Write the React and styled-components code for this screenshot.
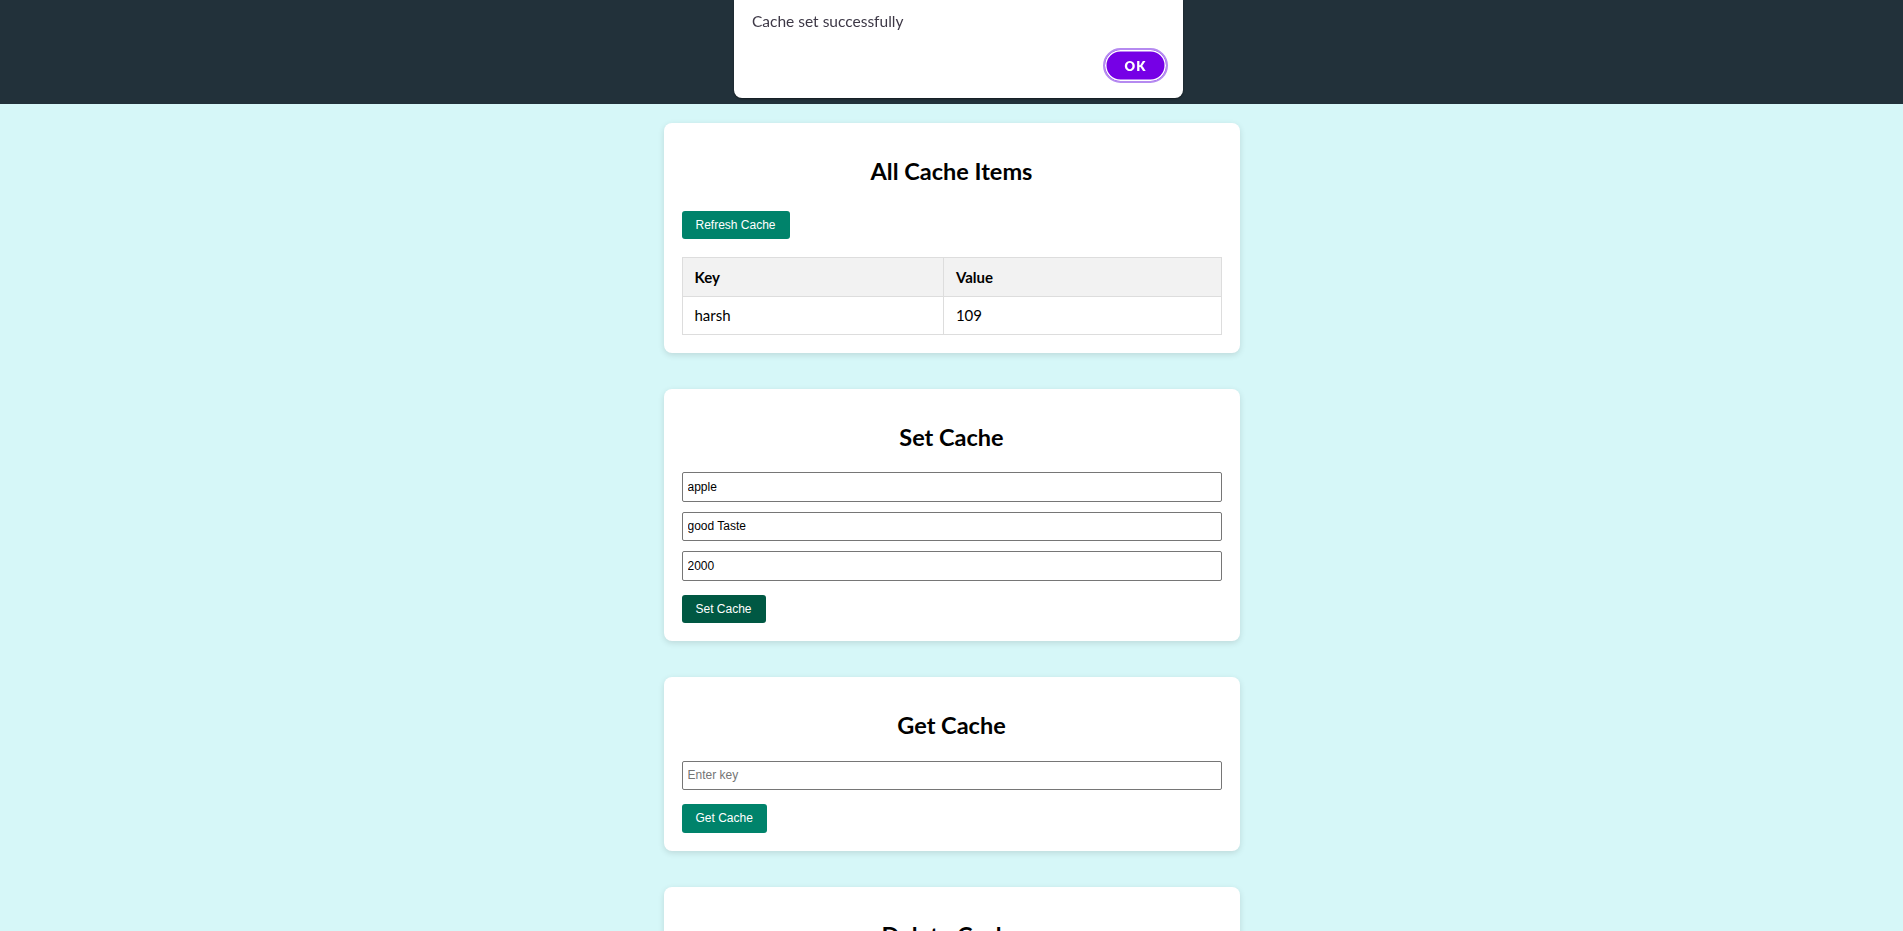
import React from "react";
import styled, { createGlobalStyle } from "styled-components";

const GlobalStyle = createGlobalStyle`
  html, body { margin: 0; padding: 0; }
  html { scrollbar-width: none; }
  ::-webkit-scrollbar { display: none; }
  body {
    background: #d6f7f8;
    font-family: Lato, "Noto Sans", sans-serif;
    color: #111;
  }
`;

const Header = styled.header`
  height: 104px;
  background: #22313a;
  display: flex;
  align-items: center;
  justify-content: center;
`;

const HeaderTitle = styled.h1`
  margin: 0;
  color: #fff;
  font-size: 26px;
  font-weight: 700;
`;

const Main = styled.main`
  display: flex;
  flex-direction: column;
  align-items: center;
  padding-top: 1px;
`;

const Card = styled.section`
  width: 576px;
  box-sizing: border-box;
  margin: 18px 0;
  padding: 18px;
  background: #fff;
  border-radius: 8px;
  box-shadow: 0 2px 6px rgba(0, 0, 0, 0.12);
  display: flex;
  flex-direction: column;
  align-items: flex-start;
`;

const Title = styled.h2`
  align-self: stretch;
  margin: 16px 0 21.5px;
  font-size: 23.5px;
  line-height: 28px;
  font-weight: 700;
  text-align: center;
  color: #000;
`;

const Input = styled.input`
  align-self: stretch;
  display: block;
  box-sizing: border-box;
  height: 29.5px;
  margin: 0 0 10px;
  padding: 0 5px;
  font-family: "Liberation Sans", Arial, sans-serif;
  font-size: 12px;
  color: #000;
  border: 1px solid #767676;
  border-radius: 2px;
  background: #fff;
  outline: none;
  &::placeholder { color: #757575; }
`;

const Button = styled.button`
  margin: 4px 0 0;
  padding: 7px 14px;
  font-family: "Liberation Sans", Arial, sans-serif;
  font-size: 12px;
  line-height: 14.5px;
  color: #fff;
  background: ${(p) => (p.$active ? "#005843" : "#00836b")};
  border: none;
  border-radius: 3px;
  cursor: pointer;
`;

const Table = styled.table`
  align-self: stretch;
  margin-top: 18px;
  width: 100%;
  border-collapse: collapse;
`;

const Th = styled.th`
  width: ${(p) => p.$w || "auto"};
  height: 39px;
  box-sizing: border-box;
  padding: 0 12px;
  border: 1px solid #ddd;
  background: #f2f2f2;
  text-align: left;
  font-size: 15px;
  line-height: 19px;
  font-weight: 700;
  color: #000;
`;

const Td = styled.td`
  height: 37.5px;
  box-sizing: border-box;
  padding: 0 12px;
  border: 1px solid #ddd;
  text-align: left;
  font-size: 15px;
  line-height: 19px;
  color: #000;
`;

const Dialog = styled.div`
  position: fixed;
  top: 0;
  left: calc(50% - 217.5px);
  width: 449px;
  height: 98px;
  box-sizing: border-box;
  padding: 10px 15px 15px 18px;
  background: #fff;
  border-radius: 0 0 8px 8px;
  box-shadow: 0 1px 2px rgba(0, 0, 0, 0.45);
  display: flex;
  flex-direction: column;
  justify-content: space-between;
`;

const DialogText = styled.p`
  margin: 0;
  font-size: 15.5px;
  line-height: 22px;
  color: #3d3846;
`;

const DialogActions = styled.div`
  display: flex;
  justify-content: flex-end;
`;

const OkButton = styled.button`
  width: 65px;
  height: 35px;
  box-sizing: border-box;
  border-radius: 999px;
  border: 2px solid #b58af0;
  box-shadow: inset 0 0 0 1.5px #fff;
  background: #7600e6;
  color: #fff;
  font-family: Lato, "Noto Sans", sans-serif;
  font-weight: 800;
  font-size: 13px;
  letter-spacing: 1px;
  cursor: pointer;
`;

export default function App() {
  return (
    <>
      <GlobalStyle />
      <Header>
        <HeaderTitle>Cache Manager</HeaderTitle>
      </Header>
      <Main>
        <Card>
          <Title>All Cache Items</Title>
          <Button>Refresh Cache</Button>
          <Table>
            <thead>
              <tr>
                <Th $w="48.5%">Key</Th>
                <Th>Value</Th>
              </tr>
            </thead>
            <tbody>
              <tr>
                <Td>harsh</Td>
                <Td>109</Td>
              </tr>
            </tbody>
          </Table>
        </Card>
        <Card>
          <Title>Set Cache</Title>
          <Input defaultValue="apple" placeholder="Enter key" />
          <Input defaultValue="good Taste" placeholder="Enter value" />
          <Input defaultValue="2000" placeholder="Enter duration" />
          <Button $active>Set Cache</Button>
        </Card>
        <Card>
          <Title>Get Cache</Title>
          <Input placeholder="Enter key" />
          <Button>Get Cache</Button>
        </Card>
        <Card>
          <Title>Delete Cache</Title>
          <Input placeholder="Enter key" />
          <Button>Delete Cache</Button>
        </Card>
      </Main>
      <Dialog role="alertdialog">
        <DialogText>Cache set successfully</DialogText>
        <DialogActions>
          <OkButton>OK</OkButton>
        </DialogActions>
      </Dialog>
    </>
  );
}
